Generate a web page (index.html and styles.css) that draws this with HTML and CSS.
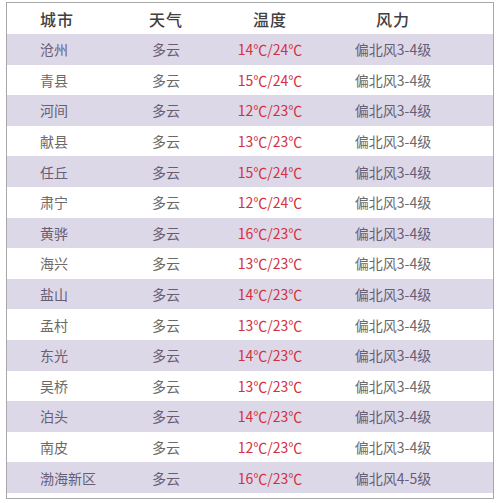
FILE: index.html
```html
<!DOCTYPE html>
<html lang="zh">
<head>
<meta charset="utf-8">
<link rel="stylesheet" href="styles.css">
</head>
<body>
<div class="frame">
  <div class="row head"><div class="c1">城市</div><div>天气</div><div>温度</div><div>风力</div></div>
  <div class="row alt"><div class="c1">沧州</div><div>多云</div><div class="t">14℃/24℃</div><div>偏北风3-4级</div></div>
  <div class="row"><div class="c1">青县</div><div>多云</div><div class="t">15℃/24℃</div><div>偏北风3-4级</div></div>
  <div class="row alt"><div class="c1">河间</div><div>多云</div><div class="t">12℃/23℃</div><div>偏北风3-4级</div></div>
  <div class="row"><div class="c1">献县</div><div>多云</div><div class="t">13℃/23℃</div><div>偏北风3-4级</div></div>
  <div class="row alt"><div class="c1">任丘</div><div>多云</div><div class="t">15℃/24℃</div><div>偏北风3-4级</div></div>
  <div class="row"><div class="c1">肃宁</div><div>多云</div><div class="t">12℃/24℃</div><div>偏北风3-4级</div></div>
  <div class="row alt"><div class="c1">黄骅</div><div>多云</div><div class="t">16℃/23℃</div><div>偏北风3-4级</div></div>
  <div class="row"><div class="c1">海兴</div><div>多云</div><div class="t">13℃/23℃</div><div>偏北风3-4级</div></div>
  <div class="row alt"><div class="c1">盐山</div><div>多云</div><div class="t">14℃/23℃</div><div>偏北风3-4级</div></div>
  <div class="row"><div class="c1">孟村</div><div>多云</div><div class="t">13℃/23℃</div><div>偏北风3-4级</div></div>
  <div class="row alt"><div class="c1">东光</div><div>多云</div><div class="t">14℃/23℃</div><div>偏北风3-4级</div></div>
  <div class="row"><div class="c1">吴桥</div><div>多云</div><div class="t">13℃/23℃</div><div>偏北风3-4级</div></div>
  <div class="row alt"><div class="c1">泊头</div><div>多云</div><div class="t">14℃/23℃</div><div>偏北风3-4级</div></div>
  <div class="row"><div class="c1">南皮</div><div>多云</div><div class="t">12℃/23℃</div><div>偏北风3-4级</div></div>
  <div class="row alt"><div class="c1">渤海新区</div><div>多云</div><div class="t">16℃/23℃</div><div>偏北风4-5级</div></div>
</div>
</body>
</html>
```
FILE: styles.css
```css
html, body {
  margin: 0;
  padding: 0;
  background: #ffffff;
}
body {
  font-family: "Noto Sans CJK SC", "Noto Sans", sans-serif;
  padding: 2px 0 0 6px;
}
.frame {
  width: 486px;
  height: 495px;
  border: 1px solid #a8a8a8;
  background: #fff;
}
.row {
  display: grid;
  grid-template-columns: 103px 112px 96px 150px;
  padding-right: 25px;
  height: 30.6px;
  align-items: center;
  font-size: 14px;
  color: #6a6a6a;
}
.row > div {
  text-align: center;
  white-space: nowrap;
}
.row > .c1 {
  text-align: left;
  padding-left: 33px;
}
.head {
  height: 31px;
  font-size: 16px;
  font-weight: 500;
  color: #404040;
  letter-spacing: 1px;
}
.alt {
  background: #ddd8e8;
  color: #675d75;
}
.t {
  color: #d4303f;
}
```
